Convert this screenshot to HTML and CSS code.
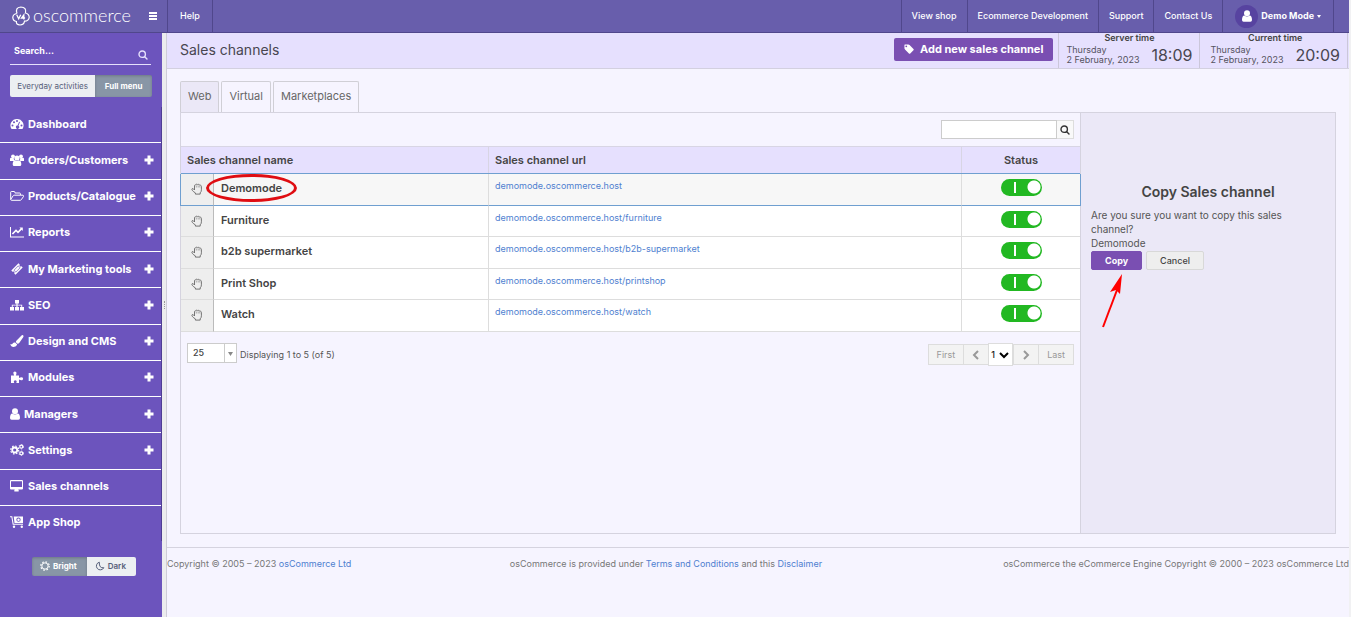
FILE: index.html
```html
<!DOCTYPE html>
<html lang="en">
  <head>
    <meta charset="UTF-8" />
    <meta name="viewport" content="width=device-width, initial-scale=1.0" />
    <title>Sales channels</title>
    <link rel="stylesheet" href="styles.css">
  </head>

  <body>
    <!-- Icon set -->
    <svg class="icon-set" aria-hidden="true">
      <symbol id="i-plus" viewBox="0 0 10 10"><path d="M3.5 .5h3v3h3v3h-3v3h-3v-3h-3v-3h3z" /></symbol>
      <symbol id="i-dashboard" viewBox="0 0 14 12"><path fill-rule="evenodd" d="M7 1a6.5 6.5 0 0 0-5.500 10h11A6.500 6.500 0 0 0 7 1zM2.500 6.500a1 1 0 1 1 0 2 1 1 0 0 1 0-2zM4 3.300a1 1 0 1 1 0 2 1 1 0 0 1 0-2zM7 2a1 1 0 1 1 0 2 1 1 0 0 1 0-2zM11.500 6.500a1 1 0 1 1 0 2 1 1 0 0 1 0-2zM9.200 3.800l.8.3-1.500 3.700a1.600 1.600 0 1 1-1-.3z" /></symbol>
      <symbol id="i-users" viewBox="0 0 14 12"><circle cx="3" cy="2.300" r="1.900" /><circle cx="11" cy="2.300" r="1.900" /><circle cx="7" cy="4" r="2.600" /><path d="M0 7V5q0-1.200 1-1.200h2.700Q3.600 6 5 7zM14 7V5q0-1.200-1-1.200h-2.700Q10.400 6 9 7zM2.700 10.500q0-4 2.300-4.200 2 1.200 4 0 2.300.2 2.300 4.200 0 1.500-1.500 1.500H4.200q-1.500 0-1.500-1.500z" /></symbol>
      <symbol id="i-folder" viewBox="0 0 14 12"><path fill="none" stroke="currentColor" stroke-linejoin="round" d="M.700 9.500V2.200q0-.7.700-.7h2.800q.7 0 .7.700v.8h4.800q.7 0 .7.700v1.500H4.200q-.6 0-1 .5L.700 9.500q0 .8.800.8h8.700q.6 0 1-.5l2.300-3.300q.4-1-.5-1.300h-2.600" /></symbol>
      <symbol id="i-chart" viewBox="0 0 14 12"><path d="M0 1h1v9.500h13v1H0zM12.800 1.500v3.400l-1.100-1.100L8 7.500 6 5.500 3 8.600 1.800 7.400 6 3.200l2 2 2.500-2.600-1.100-1.100z" /></symbol>
      <symbol id="i-ticket" viewBox="0 0 14 12"><path fill-rule="evenodd" d="M8.500.3l1.200 1.200a1.300 1.300 0 0 0 1.800 1.800l1.200 1.200-7.200 7.200-1.200-1.200a1.300 1.300 0 0 0-1.800-1.800L1.300 7.500zM8.300 2.500L3.600 7.200l2.200 2.200 4.700-4.700zM8.300 3.200l1.500 1.500-4 4-1.500-1.500z" /></symbol>
      <symbol id="i-sitemap" viewBox="0 0 14 12"><path d="M5 1h4v3.500H7.600v1.300h4.600V8H14v3.500h-4V8h1.300V6.600H7.600V8H9v3.500H5V8h1.400V6.600H2.700V8H4v3.500H0V8h1.800V5.800h4.600V4.500H5z" /></symbol>
      <symbol id="i-brush" viewBox="0 0 14 12"><path d="M12.300 0q1.200 0 1.200 1.200 0 .5-.3 1L9.400 7.700Q8.500 9 7.500 8.800L5.900 7.200q-.2-.8.700-1.600l4.900-5.200q.4-.4.800-.4zM5.200 7.600l2 2Q6.500 12 3.700 12 .800 12 .300 9q1.200.6 1.800.2.500-.3.700-.9.900-1.300 2.400-.7z" /></symbol>
      <symbol id="i-puzzle" viewBox="0 0 14 12"><path d="M1 4.500h3.200Q3 2.500 3.500 1.300q1.400-1.400 2.800 0Q6.800 2.500 5.800 4.500H9v2.400q2.300-1.200 3.500-.3 1.200 1.200 0 2.400-1.200.8-3.500-.4V12H6.200q.9-1.500.2-2.300-1.200-.9-2.300 0Q3.500 10.500 4.300 12H1z" /></symbol>
      <symbol id="i-user" viewBox="0 0 10 12"><circle cx="5" cy="3.300" r="3" /><path d="M0 10Q0 5.500 2.400 5.400q2.600 2 5.200 0Q10 5.500 10 10q0 1.700-1.600 1.700H1.600Q0 11.700 0 10z" /></symbol>
      <symbol id="i-cogs" viewBox="0 0 14 12"><g fill="none" stroke="currentColor"><circle cx="4.700" cy="6" r="2.500" stroke-width="1.800" /><circle cx="4.700" cy="6" r="4" stroke-width="1.200" stroke-dasharray="1.600 1.540" /><circle cx="11.300" cy="2.700" r="1.500" stroke-width="1.200" /><circle cx="11.300" cy="2.700" r="2.300" stroke-width=".8" stroke-dasharray="1.200 1.200" /><circle cx="11.300" cy="9.300" r="1.500" stroke-width="1.200" /><circle cx="11.300" cy="9.300" r="2.300" stroke-width=".8" stroke-dasharray="1.200 1.200" /></g></symbol>
      <symbol id="i-screen" viewBox="0 0 14 12"><path fill-rule="evenodd" d="M1 0h11q1 0 1 1v7.500q0 1-1 1H8.300l.5 1.300q.2.700-.5.700H4.700q-.7 0-.5-.7l.5-1.300H1q-1 0-1-1V1q0-1 1-1zm0 1.200v5.800h11V1.200z" /></symbol>
      <symbol id="i-cart" viewBox="0 0 14 12"><path fill-rule="evenodd" d="M0 .3h2.300l1.300 7.500H13v1H2.700L1.400 1.300H0zM3.700.5h9.300v6.500H4.500zm4.800 1a2.100 2.100 0 1 0 0 4.300 2.100 2.100 0 0 0 0-4.300zm0 .9a1.200 1.200 0 1 1 0 2.500 1.200 1.200 0 0 1 0-2.500z" /><circle cx="4" cy="10.800" r="1.200" /><circle cx="11.800" cy="10.800" r="1.200" /></symbol>
      <symbol id="i-search" viewBox="0 0 10 10"><g fill="none" stroke="currentColor" stroke-width="1.400"><circle cx="4.200" cy="4.200" r="3.200" /><path stroke-linecap="round" d="M6.700 6.700L9 9" /></g></symbol>
      <symbol id="i-tag" viewBox="0 0 11 11"><path fill-rule="evenodd" d="M1 .5h3.800q.7 0 1.300.6l4.300 4.300q.7.800 0 1.500l-3.500 3.500q-.8.700-1.500 0L1.100 6.100Q.500 5.500.500 4.800V1.200Q.500.500 1 .500zM2.500 1.600a1 1 0 1 0 0 2 1 1 0 0 0 0-2z" /></symbol>
      <symbol id="i-sun" viewBox="0 0 10 10"><g fill="none" stroke="currentColor"><circle cx="5" cy="5" r="3.200" /><circle cx="5" cy="5" r="4.200" stroke-width="1.200" stroke-dasharray="1.600 1.700" /></g></symbol>
      <symbol id="i-moon" viewBox="0 0 10 10"><path fill="none" stroke="currentColor" stroke-linejoin="round" d="M4.300 1.200A3.900 3.900 0 1 0 8.800 6.700Q4 7.500 4.300 1.200z" /></symbol>
      <symbol id="i-hand" viewBox="0 0 12 12"><path fill="none" stroke="currentColor" stroke-linejoin="round" stroke-width=".9" d="M3.500 7V2.800Q3.600 1.800 4.500 1.800q.3-.7 1.200-.6.700 0 1 .5.300-.4 1-.3.800.1.900.8.300-.2.900 0 .900.300.900 1.300v3.300q0 1.900-1.200 3v1.300H4.400v-1.200Q2.700 9 1.300 7.400.500 6.100 1.300 5.600 2.200 5.200 3.500 7" /><path fill="none" stroke="currentColor" stroke-width=".5" d="M5.300 2.500v2M7.200 2.500v2M8.800 3v1.500" /></symbol>
      <symbol id="i-left" viewBox="0 0 8 10"><path fill="none" stroke="currentColor" stroke-width="2" d="M6 1L2 5l4 4" /></symbol>
      <symbol id="i-right" viewBox="0 0 8 10"><path fill="none" stroke="currentColor" stroke-width="2" d="M2 1l4 4-4 4" /></symbol>
    </svg>

    <!-- Header -->
    <header class="header">
      <a class="logo" href="#">
        <svg class="logo-mark" viewBox="0 0 18 20" aria-hidden="true">
          <path fill="none" stroke="#fff" stroke-width="1.200" d="M5 7.500Q2.900 1.500 8.800 1q6 .2 4.700 6 3.700 1 3.700 4.500-.4 3.500-4.700 3.700Q12 19 8 19q-4-.3-3.600-3.500Q1 15 .800 11.500 1 8 5 7.500" />
          <path fill="none" stroke="#fff" stroke-width="1.300" d="M4.700 8.800l2 4 2-4M11.800 13.500V9l-2.300 3h3.600" />
        </svg>
        <span class="logo-text">oscommerce</span>
      </a>
      <button class="menu-toggle" aria-label="Toggle menu"><span></span><span></span><span></span></button>
      <a class="header-item help" href="#">Help</a>
      <nav class="header-right">
        <a class="header-item" href="#">View shop</a>
        <a class="header-item" href="#">Ecommerce Development</a>
        <a class="header-item" href="#">Support</a>
        <a class="header-item" href="#">Contact Us</a>
        <button class="header-item account">
          <span class="avatar"><svg><use href="#i-user" /></svg></span>
          Demo Mode<span class="caret"></span>
        </button>
      </nav>
    </header>

    <div class="page">
      <!-- Sidebar -->
      <aside class="sidebar">
        <form class="side-search">
          <input type="text" placeholder="Search..." aria-label="Search" />
          <button type="button" aria-label="Search"><svg><use href="#i-search" /></svg></button>
        </form>
        <div class="switch menu-switch">
          <button>Everyday activities</button>
          <button class="active">Full menu</button>
        </div>
        <nav class="side-nav">
          <a href="#"><svg class="nav-icon"><use href="#i-dashboard" /></svg>Dashboard</a>
          <a href="#"><svg class="nav-icon"><use href="#i-users" /></svg>Orders/Customers<svg class="plus"><use href="#i-plus" /></svg></a>
          <a href="#"><svg class="nav-icon"><use href="#i-folder" /></svg>Products/Catalogue<svg class="plus"><use href="#i-plus" /></svg></a>
          <a href="#"><svg class="nav-icon"><use href="#i-chart" /></svg>Reports<svg class="plus"><use href="#i-plus" /></svg></a>
          <a href="#"><svg class="nav-icon"><use href="#i-ticket" /></svg>My Marketing tools<svg class="plus"><use href="#i-plus" /></svg></a>
          <a href="#"><svg class="nav-icon"><use href="#i-sitemap" /></svg>SEO<svg class="plus"><use href="#i-plus" /></svg></a>
          <a href="#"><svg class="nav-icon"><use href="#i-brush" /></svg>Design and CMS<svg class="plus"><use href="#i-plus" /></svg></a>
          <a href="#"><svg class="nav-icon"><use href="#i-puzzle" /></svg>Modules<svg class="plus"><use href="#i-plus" /></svg></a>
          <a href="#"><svg class="nav-icon narrow"><use href="#i-user" /></svg>Managers<svg class="plus"><use href="#i-plus" /></svg></a>
          <a href="#"><svg class="nav-icon"><use href="#i-cogs" /></svg>Settings<svg class="plus"><use href="#i-plus" /></svg></a>
          <a href="#"><svg class="nav-icon"><use href="#i-screen" /></svg>Sales channels</a>
          <a href="#"><svg class="nav-icon"><use href="#i-cart" /></svg>App Shop</a>
        </nav>
        <div class="switch theme-switch">
          <button class="active"><svg><use href="#i-sun" /></svg>Bright</button>
          <button><svg><use href="#i-moon" /></svg>Dark</button>
        </div>
      </aside>
      <div class="divider"><span class="grip"></span></div>

      <!-- Content -->
      <main class="main">
        <div class="title-bar">
          <h1>Sales channels</h1>
          <button class="btn-add"><svg><use href="#i-tag" /></svg>Add new sales channel</button>
          <div class="clock">
            <b>Server time</b>
            <div class="clock-row"><span>Thursday<br>2 February, 2023</span><span class="time">18:09</span></div>
          </div>
          <div class="clock">
            <b>Current time</b>
            <div class="clock-row"><span>Thursday<br>2 February, 2023</span><span class="time">20:09</span></div>
          </div>
        </div>

        <div class="content">
          <nav class="tabs">
            <a class="active" href="#">Web</a>
            <a href="#">Virtual</a>
            <a href="#">Marketplaces</a>
          </nav>

          <div class="panel">
            <section class="list">
              <form class="list-search">
                <input type="text" aria-label="Search sales channels" />
                <button type="button" aria-label="Search"><svg><use href="#i-search" /></svg></button>
              </form>

              <table class="channels">
                <colgroup>
                  <col class="col-drag"><col class="col-name"><col class="col-url"><col class="col-status">
                </colgroup>
                <thead>
                  <tr>
                    <th colspan="2">Sales channel name</th>
                    <th>Sales channel url</th>
                    <th class="status">Status</th>
                  </tr>
                </thead>
                <tbody>
                  <tr class="selected">
                    <td class="drag"><svg><use href="#i-hand" /></svg></td>
                    <td class="name"><span class="marked">Demomode</span></td>
                    <td class="url"><a href="#">demomode.oscommerce.host</a></td>
                    <td class="status"><input type="checkbox" class="toggle" aria-label="Demomode status" checked></td>
                  </tr>
                  <tr>
                    <td class="drag"><svg><use href="#i-hand" /></svg></td>
                    <td class="name">Furniture</td>
                    <td class="url"><a href="#">demomode.oscommerce.host/furniture</a></td>
                    <td class="status"><input type="checkbox" class="toggle" aria-label="Furniture status" checked></td>
                  </tr>
                  <tr>
                    <td class="drag"><svg><use href="#i-hand" /></svg></td>
                    <td class="name">b2b supermarket</td>
                    <td class="url"><a href="#">demomode.oscommerce.host/b2b-supermarket</a></td>
                    <td class="status"><input type="checkbox" class="toggle" aria-label="b2b supermarket status" checked></td>
                  </tr>
                  <tr>
                    <td class="drag"><svg><use href="#i-hand" /></svg></td>
                    <td class="name">Print Shop</td>
                    <td class="url"><a href="#">demomode.oscommerce.host/printshop</a></td>
                    <td class="status"><input type="checkbox" class="toggle" aria-label="Print Shop status" checked></td>
                  </tr>
                  <tr>
                    <td class="drag"><svg><use href="#i-hand" /></svg></td>
                    <td class="name">Watch</td>
                    <td class="url"><a href="#">demomode.oscommerce.host/watch</a></td>
                    <td class="status"><input type="checkbox" class="toggle" aria-label="Watch status" checked></td>
                  </tr>
                </tbody>
              </table>

              <div class="list-footer">
                <select class="page-size" aria-label="Rows per page"><option>25</option></select>
                <span class="count">Displaying 1 to 5 (of 5)</span>
                <div class="pager">
                  <button>First</button>
                  <button aria-label="Previous"><svg><use href="#i-left" /></svg></button>
                  <select aria-label="Page"><option>1</option></select>
                  <button aria-label="Next"><svg><use href="#i-right" /></svg></button>
                  <button>Last</button>
                </div>
              </div>
            </section>

            <aside class="details">
              <h2>Copy Sales channel</h2>
              <p>Are you sure you want to copy this sales channel?</p>
              <p>Demomode</p>
              <div class="actions">
                <button class="btn btn-primary">Copy</button>
                <button class="btn">Cancel</button>
                <svg class="pointer" viewBox="0 0 24 56" aria-hidden="true">
                  <path d="M2 54L16 17" stroke="#f00" stroke-width="2" />
                  <path d="M21 1l-12 18 6-2 4 4z" fill="#f00" />
                </svg>
              </div>
            </aside>
          </div>
        </div>

        <footer class="footer">
          <span>Copyright © 2005 – 2023 <a href="#">osCommerce Ltd</a></span>
          <span>osCommerce is provided under <a href="#">Terms and Conditions</a> and this <a href="#">Disclaimer</a></span>
          <span>osCommerce the eCommerce Engine Copyright © 2000 – 2023 osCommerce Ltd</span>
        </footer>
      </main>
    </div>
  </body>
</html>
```
FILE: styles.css
```css
* {
  box-sizing: border-box;
}

body {
  margin: 0;
  min-height: 100vh;
  display: flex;
  flex-direction: column;
  border-right: 2px solid #f1f1f3;
  background-color: #f6f4ff;
  color: #555;
  font-family: Inter, "Liberation Sans", sans-serif;
  font-size: 10px;
  line-height: 14px;
}

a {
  color: #4f7fd0;
  text-decoration: none;
}

button,
input,
select {
  font: inherit;
  margin: 0;
  padding: 0;
  border: 0;
  border-radius: 0;
}

button {
  cursor: pointer;
}

svg {
  fill: currentColor;
  flex: none;
  width: 10px;
  height: 10px;
}

.icon-set {
  display: none;
}

/* Header */
.header {
  display: flex;
  align-items: stretch;
  height: 33px;
  background-color: #685eac;
  border-bottom: 1px solid #50478c;
  color: #fff;
}

.logo {
  display: flex;
  flex: none;
  align-items: center;
  gap: 3px;
  width: 149px;
  padding-left: 12px;
  color: #fff;
}

.logo-mark {
  width: 18px;
  height: 20px;
}

.logo-text {
  font-family: Lato, sans-serif;
  font-size: 18px;
  font-weight: 300;
  line-height: 24px;
  padding-bottom: 3px;
}

.menu-toggle {
  display: flex;
  flex: none;
  flex-direction: column;
  justify-content: center;
  gap: 1px;
  width: 18px;
  background: none;
}

.menu-toggle span {
  width: 8px;
  height: 2px;
  background-color: #fff;
}

.header-item {
  display: flex;
  align-items: center;
  padding: 0 10px;
  border-left: 1px solid #50478c;
  background: none;
  color: #fff;
  font-size: 9px;
  font-weight: 500;
}

.help {
  padding: 0 12px;
  border-right: 1px solid #50478c;
}

.header-right {
  display: flex;
  margin-left: auto;
  padding-right: 15px;
}

.account {
  padding: 0 12px;
  border-right: 1px solid #50478c;
  font-weight: 700;
}

.avatar {
  display: flex;
  align-items: center;
  justify-content: center;
  width: 23px;
  height: 23px;
  margin-right: 3px;
  border-radius: 50%;
  background-color: #5743a0;
}

.avatar svg {
  width: 10px;
  height: 12px;
}

.caret {
  margin-left: 3px;
  border: 2px solid transparent;
  border-top: 3px solid #fff;
  border-bottom: 0;
}

.page {
  flex: 1;
  display: flex;
}

/* Sidebar */
.sidebar {
  width: 162px;
  flex: none;
  display: flex;
  flex-direction: column;
  background-color: #6c54bd;
}

.side-search {
  display: flex;
  margin: 6px 11px 0 10px;
  height: 26px;
  border-bottom: 1px solid #e6e0fc;
}

.side-search input {
  flex: 1;
  min-width: 0;
  padding: 0 4px 2px;
  background: none;
  color: #fff;
  font-size: 9px;
  font-weight: 700;
}

.side-search input::placeholder {
  color: #fff;
}

.side-search button {
  display: flex;
  align-items: flex-end;
  padding: 0 3px 4px;
  background: none;
  color: #e6e0fc;
}

.switch {
  display: flex;
  border-radius: 2px;
  overflow: hidden;
}

.switch button {
  display: flex;
  align-items: center;
  justify-content: center;
  gap: 3px;
  background-color: #eceff2;
  color: #56607a;
  font-size: 8px;
}

.switch .active {
  background-color: #8896a6;
  color: #fff;
  font-weight: 700;
  box-shadow: inset 0 1px 3px rgba(0, 0, 0, 0.2);
}

.menu-switch {
  height: 22px;
  margin: 10px 10px;
}

.menu-switch button {
  flex: 3;
  white-space: nowrap;
}

.menu-switch .active {
  flex: 2;
}

.side-nav {
  display: flex;
  flex-direction: column;
  min-height: 434px;
  border-right: 1px solid #4f3d94;
}

.side-nav a {
  flex: 1;
  display: flex;
  align-items: center;
  gap: 4px;
  padding: 0 7px 2px 10px;
  border-bottom: 1px solid #fff;
  color: #fff;
  font-size: 11px;
  font-weight: 700;
}

.side-nav a:last-child {
  border-bottom: 0;
}

.nav-icon {
  width: 14px;
  height: 12px;
}

.nav-icon.narrow {
  width: 10px;
}

.plus {
  margin-left: auto;
}

.theme-switch {
  align-self: flex-start;
  height: 19px;
  margin: 16px 0 40px 32px;
}

.theme-switch button {
  padding: 0 10px 2px 8px;
  font-weight: 600;
}

.divider {
  display: flex;
  align-items: center;
  justify-content: center;
  flex: none;
  width: 5px;
  background-color: #ececee;
  border-right: 1px solid #cfcdd8;
}

.grip {
  height: 8px;
  margin-bottom: 40px;
  border-left: 1px dotted #999;
}

/* Title bar */
.main {
  flex: 1;
  min-width: 0;
}

.title-bar {
  display: flex;
  height: 36px;
  background-color: #e6e0fe;
  border-bottom: 1px solid #d3d0e0;
}

.title-bar h1 {
  margin: 0 auto 0 13px;
  color: #484650;
  font-size: 14px;
  font-weight: 400;
  line-height: 34px;
}

.btn-add {
  display: flex;
  align-items: center;
  gap: 6px;
  height: 23px;
  margin: 5px 5px 0 0;
  padding: 0 10px 1px;
  border-radius: 2px;
  background-color: #7a4fb2;
  color: #fff;
  font-size: 11px;
  font-weight: 700;
}

.clock {
  padding: 0 7px;
  border-left: 1px solid #cbc7da;
  font-size: 9px;
  line-height: 10px;
  color: #55535e;
}

.clock:last-child {
  padding: 0 7px 0 10px;
  border-right: 1px solid #cbc7da;
  margin-right: 1px;
}

.clock b {
  display: block;
  color: #444;
  font-weight: 600;
  text-align: center;
}

.clock-row {
  display: flex;
  align-items: center;
  gap: 12px;
  padding-top: 2px;
}

.time {
  color: #484650;
  font-size: 16px;
}

/* Tabs */
.content {
  padding: 12px 13px 13px;
}

.tabs {
  display: flex;
  gap: 2px;
}

.tabs a {
  padding: 7px 7px 8px;
  border: 1px solid #d0cfd6;
  border-bottom: 0;
  border-radius: 2px 2px 0 0;
  color: #666;
  font-size: 11px;
  line-height: 15px;
}

.tabs .active {
  background-color: #ebe8f7;
}

.panel {
  display: flex;
  min-height: 422px;
  border: 1px solid #d5d3df;
}

.list {
  flex: 1;
  min-width: 0;
  border-right: 1px solid #d5d3df;
}

.list-search {
  display: flex;
  justify-content: flex-end;
  padding: 7px 6px;
}

.list-search input {
  width: 116px;
  height: 19px;
  padding: 0 4px;
  border: 1px solid #ccc;
  background-color: #fff;
}

.list-search button {
  display: flex;
  align-items: center;
  justify-content: center;
  width: 17px;
  height: 19px;
  border: 1px solid #ddd;
  border-left: 0;
  background-color: #f9f9f9;
  color: #333;
}

/* Sales channel table */
.channels {
  width: 100%;
  height: 186px;
  table-layout: fixed;
  border-collapse: separate;
  border-spacing: 0;
  color: #444;
}

.col-drag {
  width: 33px;
}

.col-name {
  width: 275px;
}

.col-status {
  width: 118px;
}

.channels th {
  height: 28px;
  padding: 0 6px;
  border: 1px solid #d8d5e4;
  border-width: 1px 1px 1px 0;
  background-color: #e6e0fe;
  font-size: 11px;
  font-weight: 600;
  text-align: left;
}

.channels td {
  padding: 7px 6px 0;
  border: 1px solid #ddd;
  border-width: 0 1px 1px 0;
  background-color: #fff;
  vertical-align: top;
}

.channels th:last-child,
.channels td:last-child {
  border-right: 0;
}

.channels .drag {
  padding: 9px 0 0;
  border-right-color: #bbb;
  background-color: #eee;
  color: #666;
  text-align: center;
}

.drag svg {
  width: 12px;
  height: 12px;
}

.channels .name {
  padding-left: 7px;
  font-size: 11px;
  font-weight: 600;
}

.channels .url {
  padding-top: 5px;
  font-size: 9px;
}

.channels .status {
  text-align: center;
}

.channels td.status {
  padding-top: 5px;
}

.selected td {
  border-bottom-color: #6f9fd0;
  box-shadow: 0 -1px 0 #6f9fd0;
}

.selected td:not(.drag) {
  background-color: #f7f7f7;
}

.selected td:first-child {
  box-shadow: 0 -1px 0 #6f9fd0, -1px 0 0 #6f9fd0;
}

.selected td:last-child {
  box-shadow: 0 -1px 0 #6f9fd0, 1px 0 0 #6f9fd0;
}

.marked {
  position: relative;
}

.marked::after {
  content: "";
  position: absolute;
  inset: -7px -15px;
  border: 3px solid #df0d12;
  border-radius: 50%;
}

.toggle {
  appearance: none;
  display: inline-block;
  width: 41px;
  height: 17px;
  border-radius: 9px;
  background: radial-gradient(circle at 33px 8px, #fff 6px, transparent 7px),
    linear-gradient(#fff, #fff) 13px 3px / 2px 11px no-repeat #22b822;
  cursor: pointer;
}

/* Table footer */
.list-footer {
  display: flex;
  align-items: flex-start;
  padding: 11px 6px;
}

.page-size {
  appearance: none;
  width: 50px;
  height: 20px;
  margin-right: 3px;
  padding-left: 5px;
  border: 1px solid #ccc;
  background: #fff url("data:image/svg+xml,%3Csvg xmlns='http://www.w3.org/2000/svg' width='12' height='18'%3E%3Cpath d='M0 0h1v18H0z' fill='%23ccc'/%3E%3Cpath d='M4 8h5l-2.500 4z' fill='%23888'/%3E%3C/svg%3E") right center no-repeat;
  color: #444;
  font-size: 9px;
  font-weight: 500;
}

.count {
  padding-top: 5px;
  font-size: 9px;
}

.pager {
  display: flex;
  align-items: center;
  margin-left: auto;
}

.pager button {
  display: flex;
  align-items: center;
  height: 21px;
  padding: 0 8px;
  border: 1px solid #ddd;
  border-right: 0;
  background-color: #f3f3f3;
  color: #999;
  font-size: 9px;
}

.pager button:last-child {
  border-right: 1px solid #ddd;
}

.pager svg {
  width: 8px;
}

.pager select {
  appearance: none;
  width: 25px;
  height: 23px;
  padding-left: 2px;
  border: 1px solid #ddd;
  background: #fff url("data:image/svg+xml,%3Csvg xmlns='http://www.w3.org/2000/svg' width='14' height='10'%3E%3Cpath d='M2 3l4 4 4-4' fill='none' stroke='%23000' stroke-width='2'/%3E%3C/svg%3E") right center no-repeat;
  color: #222;
  font-size: 9px;
  font-weight: 500;
}

/* Details */
.details {
  width: 254px;
  flex: none;
  padding: 70px 10px 20px;
  background-color: #ebe8f7;
}

.details h2 {
  margin: 0 0 7px;
  color: #444;
  font-size: 14px;
  font-weight: 600;
  line-height: 18px;
  text-align: center;
}

.details p {
  margin: 0;
}

.actions {
  position: relative;
  display: flex;
  gap: 4px;
  margin-top: 1px;
}

.btn {
  height: 19px;
  padding: 0 13px;
  border: 1px solid #d8d8d8;
  border-radius: 2px;
  background-color: #eee;
  color: #444;
  font-size: 9px;
  font-weight: 500;
}

.btn-primary {
  border-color: #7a4fb2;
  background-color: #7a4fb2;
  color: #fff;
  font-weight: 700;
}

.pointer {
  position: absolute;
  left: 10px;
  top: 22px;
  width: 24px;
  height: 56px;
}

/* Footer */
.footer {
  display: grid;
  grid-template-columns: 29% 1fr auto;
  padding: 9px 0;
  border-top: 1px solid #d5d3df;
  color: #777;
  font-size: 9px;
}
```
